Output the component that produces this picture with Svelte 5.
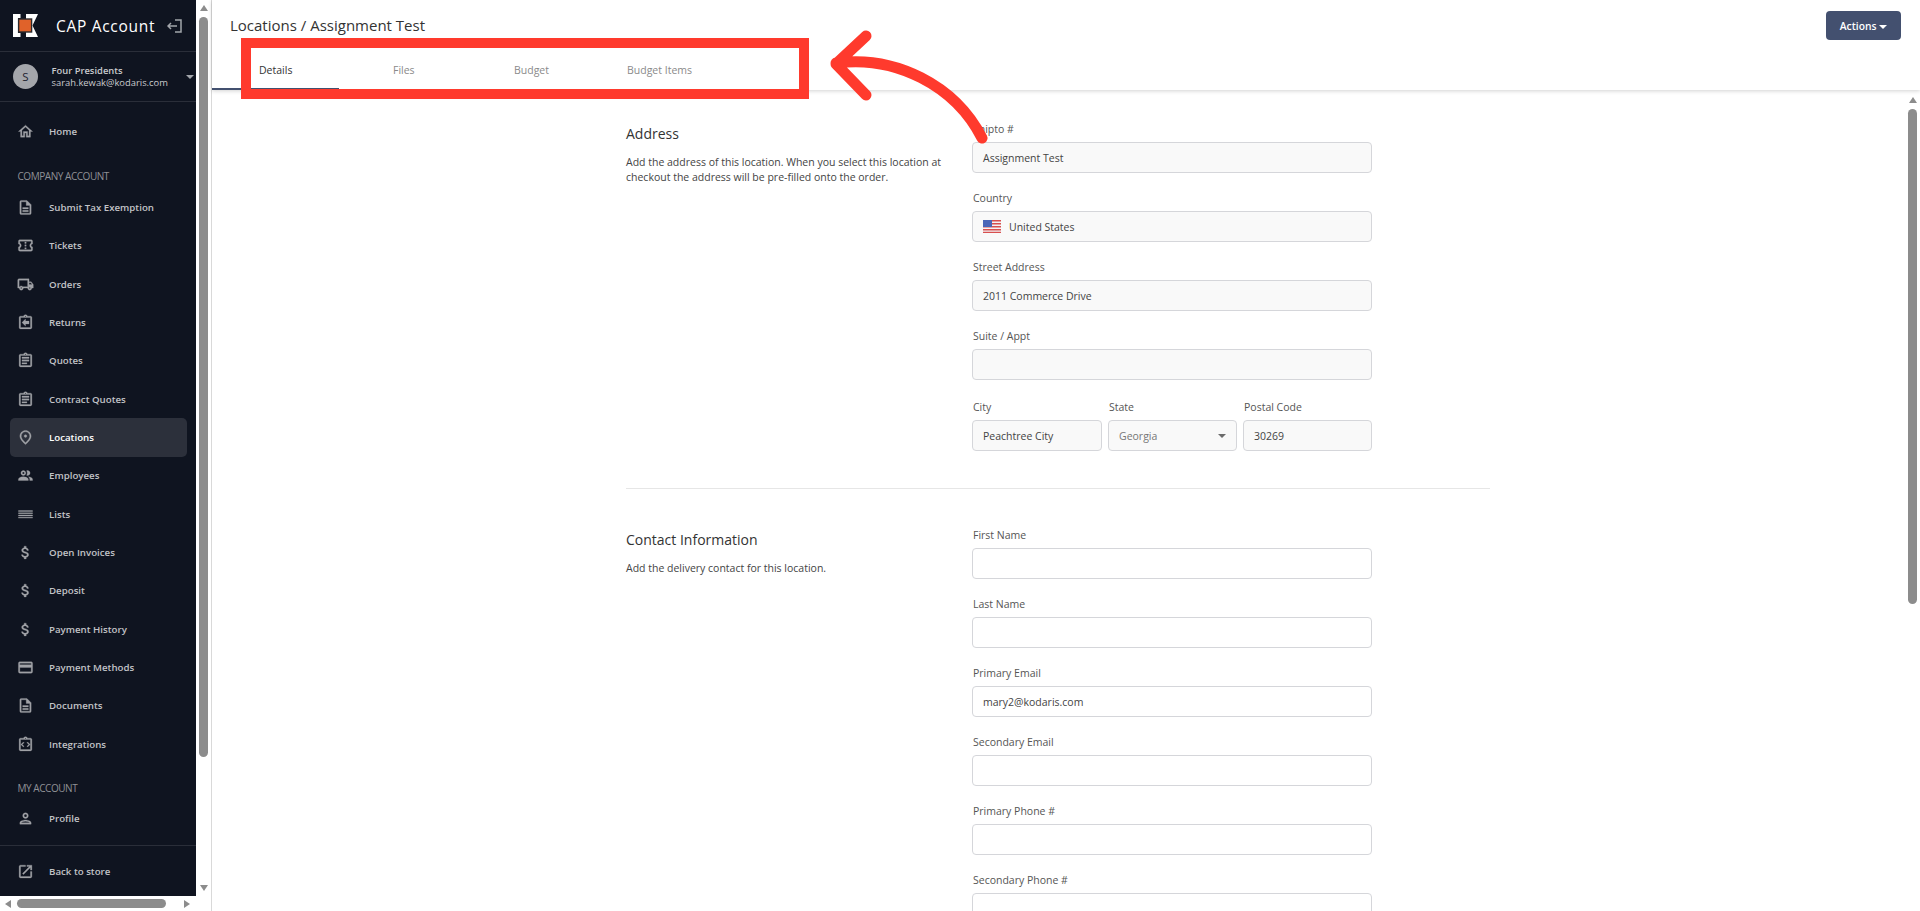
<script>
  const icons = {
    home: 'M12 5.69l5 4.5V18h-2v-6H9v6H7v-7.81l5-4.5M12 3L2 12h3v8h6v-6h2v6h6v-8h3L12 3z',
    doc: 'M8 16h8v2H8zm0-4h8v2H8zm6-10H6c-1.1 0-2 .9-2 2v16c0 1.1.89 2 1.99 2H18c1.1 0 2-.9 2-2V8l-6-6zm4 18H6V4h7v5h5v11z',
    ticket: 'M22 10V6c0-1.11-.9-2-2-2H4c-1.1 0-1.99.89-1.99 2v4c1.1 0 1.99.9 1.99 2s-.89 2-2 2v4c0 1.1.9 2 2 2h16c1.1 0 2-.9 2-2v-4c-1.1 0-2-.9-2-2s.9-2 2-2zm-2-1.46c-1.19.69-2 1.99-2 3.46s.81 2.77 2 3.46V18H4v-2.54c1.19-.69 2-1.99 2-3.46 0-1.48-.8-2.77-1.99-3.46L4 6h16v2.54zM11 15h2v2h-2zm0-4h2v2h-2zm0-4h2v2h-2z',
    truck: 'M20 8h-3V4H3c-1.1 0-2 .9-2 2v11h2c0 1.66 1.34 3 3 3s3-1.34 3-3h6c0 1.66 1.34 3 3 3s3-1.34 3-3h2v-5l-3-4zm-.5 1.5l1.96 2.5H17V9.5h2.5zM6 18c-.55 0-1-.45-1-1s.45-1 1-1 1 .45 1 1-.45 1-1 1zm2.22-3c-.55-.61-1.33-1-2.22-1s-1.67.39-2.22 1H3V6h12v9H8.22zM18 18c-.55 0-1-.45-1-1s.45-1 1-1 1 .45 1 1-.45 1-1 1z',
    clip: 'M7 15h7v2H7zm0-4h10v2H7zm0-4h10v2H7zm12-4h-4.18C14.4 1.84 13.3 1 12 1c-1.3 0-2.4.84-2.82 2H5c-1.1 0-2 .9-2 2v14c0 1.1.9 2 2 2h14c1.1 0 2-.9 2-2V5c0-1.1-.9-2-2-2zm-7-.25c.41 0 .75.34.75.75s-.34.75-.75.75-.75-.34-.75-.75.34-.75.75-.75zM19 19H5V5h14v14z',
    ret: 'M19 3h-4.18C14.4 1.84 13.3 1 12 1c-1.3 0-2.4.84-2.82 2H5c-1.1 0-2 .9-2 2v14c0 1.1.9 2 2 2h14c1.1 0 2-.9 2-2V5c0-1.1-.9-2-2-2zm-7-.25c.41 0 .75.34.75.75s-.34.75-.75.75-.75-.34-.75-.75.34-.75.75-.75zM19 19H5V5h14v14zM17 10h-5V7l-5 5 5 5v-3h5z',
    pin: 'M12 12c-1.1 0-2-.9-2-2s.9-2 2-2 2 .9 2 2-.9 2-2 2zm6-1.8C18 6.57 15.35 4 12 4s-6 2.57-6 6.2c0 2.34 1.95 5.44 6 9.14 4.05-3.7 6-6.8 6-9.14zM12 2c4.2 0 8 3.22 8 8.2 0 3.32-2.67 7.25-8 11.8-5.33-4.55-8-8.48-8-11.8C4 5.22 7.8 2 12 2z',
    people: 'M9 13.75c-2.34 0-7 1.17-7 3.5V19h14v-1.75c0-2.33-4.66-3.5-7-3.5zM9 12c1.93 0 3.5-1.57 3.5-3.5S10.93 5 9 5 5.5 6.57 5.5 8.5 7.07 12 9 12zm0-5c.83 0 1.5.67 1.5 1.5S9.83 10 9 10s-1.5-.67-1.5-1.5S8.17 7 9 7zm7.04 6.81c1.16.84 1.96 1.96 1.96 3.44V19h4v-1.75c0-2.02-3.5-3.17-5.96-3.44zM15 12c1.93 0 3.5-1.57 3.5-3.5S16.93 5 15 5c-.54 0-1.04.13-1.5.35.63.89 1 1.98 1 3.15s-.37 2.26-1 3.15c.46.22.96.35 1.5.35z',
    list: 'M2 6.5h20v1.3H2zM2 9.6h20v1.3H2zM2 12.7h20v1.3H2zM2 15.8h20v1.3H2z',
    money: 'M11.8 10.9c-2.27-.59-3-1.2-3-2.15 0-1.09 1.01-1.85 2.7-1.85 1.78 0 2.44.85 2.5 2.1h2.21c-.07-1.72-1.12-3.3-3.21-3.81V3h-3v2.16c-1.94.42-3.5 1.68-3.5 3.61 0 2.31 1.91 3.46 4.7 4.13 2.5.6 3 1.48 3 2.41 0 .69-.49 1.79-2.7 1.79-2.06 0-2.87-.92-2.98-2.1h-2.2c.12 2.19 1.76 3.42 3.68 3.83V21h3v-2.15c1.95-.37 3.5-1.5 3.5-3.55 0-2.84-2.43-3.81-4.7-4.4z',
    card: 'M20 4H4c-1.11 0-1.99.89-1.99 2L2 18c0 1.11.89 2 2 2h16c1.11 0 2-.89 2-2V6c0-1.11-.89-2-2-2zm0 14H4v-6h16v6zm0-10H4V6h16v2z',
    integ: 'M19 3h-4.18C14.4 1.84 13.3 1 12 1c-1.3 0-2.4.84-2.82 2H5c-1.1 0-2 .9-2 2v14c0 1.1.9 2 2 2h14c1.1 0 2-.9 2-2V5c0-1.1-.9-2-2-2zm-7-.25c.41 0 .75.34.75.75s-.34.75-.75.75-.75-.34-.75-.75.34-.75.75-.75zM19 19H5V5h14v14zM10 9.4 7.4 12l2.6 2.6-1 1L5.4 12 9 8.4zM14 9.4l1-1 3.6 3.6-3.6 3.6-1-1 2.6-2.6z',
    person: 'M12 6c1.1 0 2 .9 2 2s-.9 2-2 2-2-.9-2-2 .9-2 2-2m0 10c2.7 0 5.8 1.29 6 2H6c.23-.72 3.31-2 6-2m0-12C9.79 4 8 5.79 8 8s1.79 4 4 4 4-1.79 4-4-1.79-4-4-4zm0 10c-2.67 0-8 1.34-8 4v2h16v-2c0-2.66-5.33-4-8-4z',
    ext: 'M19 19H5V5h7V3H5c-1.11 0-2 .9-2 2v14c0 1.1.89 2 2 2h14c1.1 0 2-.9 2-2v-7h-2v7zM14 3v2h3.59l-9.83 9.83 1.41 1.41L19 6.41V10h2V3h-7z'
  };

  const company = [
    ['Submit Tax Exemption', 'doc'], ['Tickets', 'ticket'], ['Orders', 'truck'], ['Returns', 'ret'],
    ['Quotes', 'clip'], ['Contract Quotes', 'clip'], ['Locations', 'pin', true], ['Employees', 'people'],
    ['Lists', 'list'], ['Open Invoices', 'money'], ['Deposit', 'money'], ['Payment History', 'money'],
    ['Payment Methods', 'card'], ['Documents', 'doc'], ['Integrations', 'integ']
  ];

  const tabs = ['Details', 'Files', 'Budget', 'Budget Items'];

  const contactFields = [
    ['First Name', ''], ['Last Name', ''], ['Primary Email', 'mary2@kodaris.com'],
    ['Secondary Email', ''], ['Primary Phone #', ''], ['Secondary Phone #', '']
  ];
</script>

<div class="page">
  <div class="side-wrap">
    <div class="side-col">
      <aside class="sidebar">
        <div class="brand">
          <svg class="logo" viewBox="0 0 25 23" width="25" height="23">
            <path fill="#fff" d="M0 0h7.5v4H5v15h2.5v4H0zM13 0h12l-5.5 11.5L25 23H13z" />
            <rect x="5.6" y="5" width="13" height="13" fill="#e0622a" stroke="#2a2a2e" stroke-width="1.4" />
          </svg>
          <span class="brand-name">CAP Account</span>
          <svg class="collapse" viewBox="0 0 15 14" width="15" height="14">
            <path d="M8 1h6v12H8M1 7h9M4 4 1 7l3 3" fill="none" stroke="#a3a6ab" stroke-width="1.5" />
          </svg>
        </div>
        <div class="account">
          <div class="avatar">S</div>
          <div class="who">
            <div class="who-name">Four Presidents</div>
            <div class="who-mail">sarah.kewak@kodaris.com</div>
          </div>
          <span class="caret light"></span>
        </div>
        <nav class="nav">
          <a class="item">
            <svg viewBox="0 0 24 24"><path d={icons.home} /></svg>Home
          </a>
          <div class="group">COMPANY ACCOUNT</div>
          {#each company as [label, icon, active]}
            <a class="item" class:active>
              <svg viewBox="0 0 24 24"><path d={icons[icon]} /></svg>{label}
            </a>
          {/each}
          <div class="group mine">MY ACCOUNT</div>
          <a class="item">
            <svg viewBox="0 0 24 24"><path d={icons.person} /></svg>Profile
          </a>
        </nav>
        <div class="side-foot">
          <a class="item">
            <svg viewBox="0 0 24 24"><path d={icons.ext} /></svg>Back to store
          </a>
        </div>
      </aside>
      <div class="hbar">
        <span class="arrow left"></span>
        <div class="hthumb"></div>
        <span class="arrow right"></span>
      </div>
    </div>
    <div class="vbar side-v">
      <span class="arrow up"></span>
      <div class="vthumb"></div>
      <span class="arrow down"></span>
    </div>
  </div>

  <main class="main">
    <header class="head">
      <div class="head-top">
        <h1>Locations / Assignment Test</h1>
        <button class="actions" type="button">Actions <span class="caret"></span></button>
      </div>
      <div class="tabs">
        {#each tabs as tab, i}
          <div class="tab" class:on={i === 0}>{tab}</div>
        {/each}
      </div>
    </header>

    <div class="body">
      <div class="scroll">
        <div class="content">
          <section class="sec">
            <div class="sec-info">
              <h2>Address</h2>
              <p>Add the address of this location. When you select this location at checkout the address will be pre-filled onto the order.</p>
            </div>
            <div class="fields">
              <div class="field">
                <label>Shipto #</label>
                <div class="input filled">Assignment Test</div>
              </div>
              <div class="field">
                <label>Country</label>
                <div class="input filled">
                  <svg class="flag" viewBox="0 0 18 13" width="18" height="13">
                    <rect width="18" height="13" fill="#f3f3f6" />
                    <path d="M0 0h18v1.5H0zM0 3h18v1.5H0zM0 6h18v1.5H0zM0 9h18v1.5H0zM0 11.8h18V13H0z" fill="#d8504f" />
                    <rect width="9" height="7" fill="#4a66b8" />
                  </svg>
                  United States
                </div>
              </div>
              <div class="field">
                <label>Street Address</label>
                <div class="input filled">2011 Commerce Drive</div>
              </div>
              <div class="field">
                <label>Suite / Appt</label>
                <div class="input filled"></div>
              </div>
              <div class="triple">
                <div class="field">
                  <label>City</label>
                  <div class="input filled">Peachtree City</div>
                </div>
                <div class="field">
                  <label>State</label>
                  <div class="input filled select">Georgia<span class="caret grey"></span></div>
                </div>
                <div class="field">
                  <label>Postal Code</label>
                  <div class="input filled">30269</div>
                </div>
              </div>
            </div>
          </section>

          <hr />

          <section class="sec">
            <div class="sec-info">
              <h2>Contact Information</h2>
              <p>Add the delivery contact for this location.</p>
            </div>
            <div class="fields">
              {#each contactFields as [label, value]}
                <div class="field">
                  <label>{label}</label>
                  <div class="input">{value}</div>
                </div>
              {/each}
            </div>
          </section>
        </div>
      </div>
      <div class="vbar main-v">
        <span class="arrow up"></span>
        <div class="vthumb"></div>
      </div>
    </div>
  </main>

  <svg class="callout" width="1920" height="911" viewBox="0 0 1920 911">
    <rect x="246" y="43" width="558" height="51" fill="none" stroke="#ff3a2d" stroke-width="10" />
    <path d="M836 63C895 55 955 85 982 138M866 36 836 64 866 95" fill="none" stroke="#ff3a2d" stroke-width="11" stroke-linecap="round" stroke-linejoin="round" />
  </svg>
</div>

<style>
  :global(body) {
    margin: 0;
    font-family: "Open Sans", "Noto Sans", sans-serif;
    background: #fff;
  }

  .page {
    display: flex;
    height: 911px;
    width: 1920px;
    overflow: hidden;
    position: relative;
  }

  .side-wrap {
    display: flex;
    width: 212px;
    flex: none;
    border-right: 1px solid #d9d9d9;
    box-sizing: border-box;
  }

  .side-col {
    width: 196px;
    flex: none;
    display: flex;
    flex-direction: column;
  }

  .sidebar {
    height: 896px;
    background: #0f1420;
    display: flex;
    flex-direction: column;
    color: #c9cacd;
  }

  .brand {
    height: 52px;
    box-sizing: border-box;
    display: flex;
    align-items: center;
    padding-left: 13px;
    border-bottom: 1px solid #2a2e39;
    flex: none;
  }

  .logo {
    flex: none;
  }

  .brand-name {
    margin-left: 18px;
    font-size: 15.5px;
    letter-spacing: 0.7px;
    color: #fff;
    white-space: nowrap;
  }

  .collapse {
    margin-left: 12px;
  }

  .account {
    height: 50px;
    box-sizing: border-box;
    display: flex;
    align-items: center;
    padding-left: 13px;
    border-bottom: 1px solid #2a2e39;
    flex: none;
  }

  .avatar {
    width: 25px;
    height: 25px;
    border-radius: 50%;
    background: #a4a6ab;
    color: #1d2230;
    font-size: 11.5px;
    display: flex;
    align-items: center;
    justify-content: center;
    flex: none;
  }

  .who {
    margin-left: 13.5px;
    font-size: 9.4px;
    line-height: 12px;
    color: #c9cacd;
    white-space: nowrap;
  }

  .who-name {
    font-weight: 600;
  }

  .caret {
    display: inline-block;
    width: 0;
    height: 0;
    border-left: 4px solid transparent;
    border-right: 4px solid transparent;
    border-top: 4px solid #fff;
    vertical-align: middle;
  }

  .caret.light {
    margin-left: auto;
    margin-right: 2px;
    border-left-width: 4.5px;
    border-right-width: 4.5px;
    border-top-color: #a3a6ab;
  }

  .caret.grey {
    border-top-color: #6b6b6b;
    margin-left: auto;
    margin-right: 10px;
  }

  .nav {
    flex: 1;
    padding-top: 10.5px;
  }

  .item {
    height: 38.33px;
    margin: 0 9px 0 10px;
    padding-left: 7px;
    box-sizing: border-box;
    display: flex;
    align-items: center;
    font-size: 9.7px;
    font-weight: 600;
    color: #c2c3c7;
    border-radius: 5px;
    white-space: nowrap;
  }

  .item svg {
    width: 17px;
    height: 17px;
    fill: #a0a2a7;
    stroke: #a0a2a7;
    stroke-width: 0.4;
    margin-right: 15px;
    flex: none;
  }

  .item.active {
    background: #2c303b;
    color: #fff;
  }

  .group {
    font-size: 10px;
    color: #8f9196;
    padding-left: 17.5px;
    letter-spacing: -0.45px;
    line-height: 18px;
    margin: 16px 0 3.5px;
  }

  .group.mine {
    margin: 16px 0 2px;
  }

  .side-foot {
    border-top: 1px solid #2a2e39;
    padding-top: 6.5px;
    height: 51px;
    box-sizing: border-box;
    flex: none;
  }

  .hbar {
    height: 15px;
    background: #fff;
    display: flex;
    align-items: center;
    padding-left: 5px;
    gap: 6px;
  }

  .hthumb {
    height: 9px;
    width: 149px;
    background: #8c8c8c;
    border-radius: 5px;
  }

  .hbar .arrow.right {
    margin-left: 12px;
  }

  .vbar {
    width: 15px;
    display: flex;
    flex-direction: column;
    align-items: center;
    background: #fff;
    flex: none;
    box-sizing: border-box;
  }

  .vthumb {
    width: 9px;
    border-radius: 5px;
    background: #8c8c8c;
    margin-top: 6px;
  }

  .side-v .up {
    margin-top: 5px;
  }

  .side-v .vthumb {
    height: 740px;
  }

  .side-v .down {
    margin-top: 128px;
  }

  .main-v .up {
    margin-top: 7px;
  }

  .main-v .vthumb {
    height: 495px;
  }

  .arrow {
    display: block;
    width: 0;
    height: 0;
    flex: none;
  }

  .arrow.up {
    border-left: 4.5px solid transparent;
    border-right: 4.5px solid transparent;
    border-bottom: 6px solid #8c8c8c;
  }

  .arrow.down {
    border-left: 4.5px solid transparent;
    border-right: 4.5px solid transparent;
    border-top: 6px solid #8c8c8c;
  }

  .arrow.left {
    border-top: 4.5px solid transparent;
    border-bottom: 4.5px solid transparent;
    border-right: 6px solid #8c8c8c;
  }

  .arrow.right {
    border-top: 4.5px solid transparent;
    border-bottom: 4.5px solid transparent;
    border-left: 6px solid #8c8c8c;
  }

  .main {
    flex: 1;
    min-width: 0;
    display: flex;
    flex-direction: column;
    color: #333;
  }

  .head {
    height: 90px;
    flex: none;
    box-shadow: 0 1px 4px rgba(0, 0, 0, 0.18);
    position: relative;
    z-index: 1;
    background: #fff;
    box-sizing: border-box;
  }

  .head-top {
    display: flex;
    justify-content: space-between;
    align-items: flex-start;
    padding: 11px 19px 0 18px;
    height: 45px;
    box-sizing: border-box;
  }

  h1 {
    margin: 4px 0 0;
    font-size: 15px;
    font-weight: 400;
    color: #333;
  }

  .actions {
    width: 75px;
    height: 29px;
    border: none;
    border-radius: 4px;
    background: #43506f;
    color: #fff;
    font: 600 10.3px "Open Sans", sans-serif;
    padding: 0;
  }

  .tabs {
    display: flex;
    height: 45px;
  }

  .tab {
    width: 127px;
    box-sizing: border-box;
    padding-left: 47px;
    font-size: 10.5px;
    color: #8a8a8a;
    line-height: 50px;
  }

  .tab:nth-child(2) {
    width: 121px;
    padding-left: 54px;
  }

  .tab:nth-child(3) {
    width: 120px;
    padding-left: 54px;
  }

  .tab.on {
    color: #333;
    border-bottom: 2px solid #43506f;
  }

  .body {
    flex: 1;
    min-height: 0;
    display: flex;
  }

  .scroll {
    flex: 1;
    min-width: 0;
    overflow: hidden;
  }

  .content {
    width: 865px;
    margin: 0 auto;
    padding-top: 32px;
  }

  .sec {
    display: flex;
  }

  .sec-info {
    width: 346px;
    flex: none;
    padding-right: 30px;
    box-sizing: border-box;
  }

  h2 {
    margin: 2px 0 0;
    font-size: 14px;
    font-weight: 400;
    color: #333;
  }

  .sec-info p {
    margin: 12px 0 0;
    font-size: 10.5px;
    line-height: 15px;
    color: #444;
  }

  .fields {
    width: 400px;
    display: flex;
    flex-direction: column;
    gap: 18px;
  }

  .field {
    min-width: 0;
  }

  label {
    display: block;
    font-size: 10.5px;
    line-height: 14px;
    color: #555;
    margin: 0 0 6px 1px;
  }

  .input {
    height: 31px;
    box-sizing: border-box;
    border: 1px solid #d5d6da;
    border-radius: 4px;
    padding-left: 10px;
    display: flex;
    align-items: center;
    font-size: 10.5px;
    color: #444;
    background: #fff;
    white-space: nowrap;
  }

  .input.filled {
    background: #f9f9f9;
  }

  .input.select {
    color: #777;
  }

  .flag {
    margin-right: 8px;
  }

  .triple {
    display: grid;
    grid-template-columns: 130px 129px 129px;
    gap: 6px;
    width: 401px;
    margin-top: 2px;
  }

  hr {
    border: none;
    border-top: 1px solid #e6e6e6;
    width: 864px;
    margin: 37px 0 39px;
  }

  .callout {
    position: absolute;
    left: 0;
    top: 0;
    pointer-events: none;
    z-index: 5;
  }
</style>
